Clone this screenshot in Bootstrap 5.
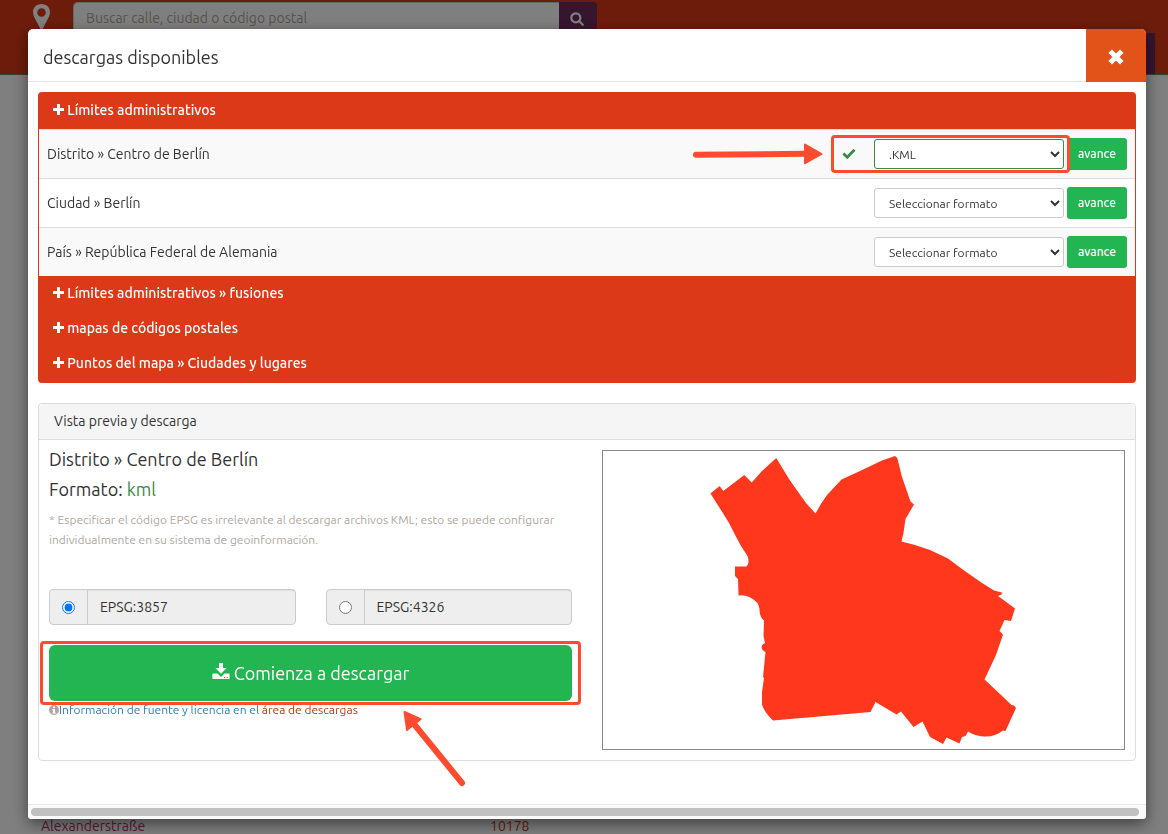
<!DOCTYPE html>
<html lang="es">
<head>
<meta charset="utf-8">
<meta name="viewport" content="width=device-width, initial-scale=1">
<title>Descargas disponibles</title>
<link href="https://cdn.jsdelivr.net/npm/bootstrap@5.3.0/dist/css/bootstrap.min.css" rel="stylesheet">
<style>
  :root { --brand: #db3917; --go: #24b553; --plum: #6d2a5e; --mark: #fe4b2f; --ok: #3c8a49; }
  body { font-family: Ubuntu, "Noto Sans", sans-serif; font-size: 14px; line-height: 20px; color: #333; background: #fff; }

  /* page behind the dialog */
  .site-head { background: var(--brand); height: 75px; border-bottom: 1px solid #777; padding: 2px 13px 0 33px; }
  .site-search { width: 524px; margin-left: 23px; height: 32px; }
  .site-search .form-control { border: 1px solid #ccc; border-radius: 4px 0 0 4px; font-size: 14px; padding: 0 12px; }
  .site-search .form-control::placeholder { color: #aea79f; }
  .site-search .btn { background: var(--plum); width: 38px; padding: 0 2px 2px 0; border: 0; border-radius: 0 4px 4px 0; color: #fff; }
  .site-tab { width: 60px; height: 41px; background: var(--plum); }
  .street-list { padding: 0 41px; line-height: 16px; }
  .street-list a { color: #b8336a; text-decoration: none; }
  .street-list a.zip { color: var(--brand); }
  .street-list .first { width: 449px; }

  /* dialog */
  .modal-backdrop { --bs-backdrop-opacity: .5; }
  .modal-dialog { max-width: none; margin: 29px 22px 15px 28px; }
  .modal-content { border: 0; border-radius: 5px; color: #333; box-shadow: 0 5px 15px rgba(0,0,0,.5); }
  .modal-header { border-bottom: 1px solid #e5e5e5; border-radius: 5px 5px 0 0; padding: 0 0 0 15px; height: 53px; }
  .modal-title { font-size: 18px; line-height: 26px; font-weight: 400; }
  .closer { width: 60px; background: #e25319; color: #fff; border: 0; border-radius: 0 5px 0 0; margin-bottom: -1px; }
  .modal-body { padding: 10px 10px 43px; }

  .groups { background: var(--brand); border-radius: 4px; padding-bottom: 2px; }
  .group-head { display: block; width: 100%; height: 35px; border: 0; background: none; color: #fff; text-align: left; font-size: 14px; font-weight: 500; line-height: 20px; padding: 0 15px 2px; }
  .group-head.open { height: 37px; }
  .group-head svg { vertical-align: 0; }
  .go-btn svg { vertical-align: -1px; }
  .formats { margin: 0 1px; width: calc(100% - 2px); background: #fff; }
  .formats th, .formats td { border-top: 1px solid #ddd; padding: 8px; vertical-align: middle; font-weight: 400; }
  .formats tr:nth-child(odd) { background: #f9f9f9; }
  .formats th { width: 48%; }
  .pickers { gap: 3px; }
  .fmt { width: 190px; height: 30px; border: 1px solid #ccc; border-radius: 3px; background: #fff; color: #333; font-size: 12px; padding: 0 10px; }
  .fmt.picked { border-color: var(--ok); }
  .btn-next { width: 60px; height: 32px; padding: 0; border: 0; border-radius: 3px; background: var(--go); color: #fff; font-size: 12px; font-weight: 500; }
  .pick-wrap { gap: 18px; }

  .preview { margin-top: 20px; border: 1px solid #ddd; border-radius: 4px; }
  .preview .card-header { background: #f5f5f5; border-bottom: 1px solid #ddd; padding: 7px 15px 8px; }
  .preview .card-body { padding: 10px; }
  .pair { --bs-gutter-x: 30px; }
  .big-line { font-size: 18px; line-height: 18px; font-weight: 400; margin: 0 0 12px; }
  .note { font-size: 12px; color: #aea79f; margin: 0 0 39px; }
  .epsg { border: 1px solid #ccc; border-radius: 4px; background: #eee; height: 36px; }
  .epsg .knob { width: 38px; border-right: 1px solid #ccc; }
  .epsg input { width: 13px; height: 13px; margin: 0; }
  .epsg label { padding: 0 12px; box-shadow: inset 0 1px 1px rgba(0,0,0,.075); line-height: 34px; }
  .go-wrap { margin-top: 20px; }
  .go-btn { height: 56px; border: 0; border-radius: 6px; background: var(--go); color: #fff; font-size: 18px; }
  .source { font-size: 12px; line-height: 18px; }
  .source a { color: #2a82ac; text-decoration: none; }
  .source a.area { color: #b8371a; }
  .map-box { border: 1px solid #888; height: 300px; }

  .hscroll { border-top: 1px solid #e8e8e8; background: #fafafa; border-radius: 0 0 3px 3px; height: 15px; padding: 3px 7px 0 3px; }
  .hscroll div { background: #c1c1c1; height: 8px; border-radius: 4px; }

  /* highlights laid over the controls */
  .frame { position: absolute; border: 3px solid var(--mark); border-radius: 4px; pointer-events: none; }
  .frame-pick { inset: -4px -6px -4px -11px; }
  .frame-go { inset: -4px -9px -4px -9px; }
  .arrow-pick { position: absolute; right: calc(100% + 18px); top: 4px; }
  .arrow-go { position: absolute; left: 353px; top: 65px; }
</style>
</head>
<body>
<svg class="d-none" aria-hidden="true">
  <symbol id="plus" viewBox="0 0 11 11"><path fill="currentColor" d="M4 0.6Q4 0 4.6 0H6.4Q7 0 7 .6V4h3.4q.6 0 .6.6v1.8q0 .6-.6.6H7v3.4q0 .6-.6.6H4.600q-.6 0-.6-.6V7H.6Q0 7 0 6.400V4.600Q0 4 .6 4H4z"/></symbol>
</svg>

<div class="d-flex flex-column vh-100 overflow-hidden">
  <header class="site-head d-flex align-items-start">
    <svg width="17" height="30" viewBox="0 0 17 30"><path fill="#fff" fill-rule="evenodd" d="M8.500 2C3.500 2 0 5.600 0 10c0 3 1.500 5.500 3.500 9.500l5 9.500 5-9.500C15.500 15.500 17 13 17 10c0-4.400-3.500-8-8.500-8zm0 4.200a4 4 0 1 1 0 8.600 4 4 0 0 1 0-8.600z"/></svg>
    <form class="site-search input-group flex-nowrap">
      <input class="form-control" type="search" aria-label="Buscar" placeholder="Buscar calle, ciudad o código postal">
      <button class="btn" type="button" aria-label="Buscar"><svg width="14" height="14" viewBox="0 0 14 14" fill="none" stroke="#fff" stroke-width="2.200"><circle cx="5.800" cy="5.800" r="4.500"/><path d="M9.200 9.200l3.600 3.600" stroke-linecap="round"/></svg></button>
    </form>
    <div class="site-tab ms-auto align-self-end"></div>
  </header>
  <div class="street-list d-flex mt-auto">
    <a class="first" href="#">Alexanderstraße</a><a class="zip" href="#">10178</a>
  </div>
</div>

<div class="modal-backdrop show"></div>
<div class="modal d-block" tabindex="-1" role="dialog" aria-labelledby="dlg-title">
  <div class="modal-dialog">
    <div class="modal-content">
      <div class="modal-header align-items-stretch">
        <h4 class="modal-title align-self-center pt-1" id="dlg-title">descargas disponibles</h4>
        <button class="closer" type="button" aria-label="Cerrar"><svg width="18" height="18" viewBox="0 0 18 18"><path d="M3.200 3.200l11.600 11.600m0-11.600l-11.600 11.600" stroke="#fff" stroke-width="5"/></svg></button>
      </div>

      <div class="modal-body">
        <div class="groups">
          <button class="group-head open" type="button"><svg width="11" height="11"><use href="#plus"/></svg> Límites administrativos</button>
          <table class="formats">
            <tbody>
              <tr>
                <th scope="row">Distrito » Centro de Berlín</th>
                <td>
                  <div class="pickers d-flex justify-content-end align-items-center">
                    <div class="pick-wrap position-relative d-flex align-items-center">
                      <svg width="14" height="12" viewBox="0 0 14 12"><path fill="#3c8a49" d="M.4 6.600L2.300 4.600 5.200 7.200 11.500.8l2 1.900L5.300 11.200z"/></svg>
                      <select class="fmt picked" aria-label="Formato para Centro de Berlín"><option>.KML</option></select>
                      <span class="frame frame-pick"></span>
                      <svg class="arrow-pick" width="131" height="22" viewBox="0 0 131 22"><path d="M3 11.700L112 10.800" stroke="#fe4b2f" stroke-width="6" stroke-linecap="round"/><path fill="#fe4b2f" d="M111 1.500q0-1.500 1.500-.8L129 10.300q1.200.7 0 1.400L112.500 21q-1.500.6-1.500-.8z"/></svg>
                    </div>
                    <button class="btn-next" type="button">avance</button>
                  </div>
                </td>
              </tr>
              <tr>
                <th scope="row">Ciudad » Berlín</th>
                <td>
                  <div class="pickers d-flex justify-content-end align-items-center">
                    <select class="fmt" aria-label="Formato para Berlín"><option>Seleccionar formato</option></select>
                    <button class="btn-next" type="button">avance</button>
                  </div>
                </td>
              </tr>
              <tr>
                <th scope="row">País » República Federal de Alemania</th>
                <td>
                  <div class="pickers d-flex justify-content-end align-items-center">
                    <select class="fmt" aria-label="Formato para Alemania"><option>Seleccionar formato</option></select>
                    <button class="btn-next" type="button">avance</button>
                  </div>
                </td>
              </tr>
            </tbody>
          </table>
          <button class="group-head" type="button"><svg width="11" height="11"><use href="#plus"/></svg> Límites administrativos » fusiones</button>
          <button class="group-head" type="button"><svg width="11" height="11"><use href="#plus"/></svg> mapas de códigos postales</button>
          <button class="group-head" type="button"><svg width="11" height="11"><use href="#plus"/></svg> Puntos del mapa » Ciudades y lugares</button>
        </div>

        <section class="card preview">
          <div class="card-header">Vista previa y descarga</div>
          <div class="card-body">
            <div class="row pair">
              <div class="col-6">
                <h4 class="big-line">Distrito » Centro de Berlín</h4>
                <h4 class="big-line">Formato: <span style="color:var(--ok)">kml</span></h4>
                <p class="note">* Especificar el código EPSG es irrelevante al descargar archivos KML; esto se puede configurar individualmente en su sistema de geoinformación.</p>
                <div class="row pair">
                  <div class="col-6">
                    <div class="epsg d-flex">
                      <span class="knob d-flex align-items-center justify-content-center"><input type="radio" name="epsg" id="e3857" checked></span>
                      <label class="flex-fill" for="e3857">EPSG:3857</label>
                    </div>
                  </div>
                  <div class="col-6">
                    <div class="epsg d-flex">
                      <span class="knob d-flex align-items-center justify-content-center"><input type="radio" name="epsg" id="e4326"></span>
                      <label class="flex-fill" for="e4326">EPSG:4326</label>
                    </div>
                  </div>
                </div>
                <div class="go-wrap position-relative">
                  <button class="go-btn w-100" type="button"><svg width="18" height="18" viewBox="0 0 18 18"><path fill="#fff" fill-rule="evenodd" d="M7 0h4v5h3.500L9 10.800 3.500 5H7zM1 10.500h4.500L9 14 12.500 10.500H17q.6 0 .6.6v4.300q0 .6-.6.6H1q-.6 0-.6-.6v-4.300Q.4 10.500 1 10.500zm11 3.500v1h1.200v-1zm2.600 0v1h1.200v-1z"/></svg> Comienza a descargar</button>
                  <span class="frame frame-go"></span>
                  <svg class="arrow-go" width="66" height="78" viewBox="0 0 66 78"><path d="M12 14L60 73" stroke="#fe4b2f" stroke-width="6" stroke-linecap="round"/><path fill="#fe4b2f" d="M1.500 2q0-1.500 1.500-1L19 8.200q1.200.6.300 1.500L5.500 20.800q-1.200.8-1.400-.6z"/></svg>
                </div>
                <div class="source d-flex align-items-center">
                  <svg width="10" height="10" viewBox="0 0 10 10"><circle cx="5" cy="5" r="5" fill="#aea79f"/><path fill="#fff" d="M4 1.500h2V3H4zM3.300 4H6v3.500h.8v1H3.300v-1H4V5h-.7z"/></svg>
                  <span><a href="#">Información de fuente y licencia en el</a> <a class="area" href="#">área de descargas</a></span>
                </div>
              </div>
              <div class="col-6">
                <div class="map-box d-flex justify-content-center">
                  <svg width="521" height="298" viewBox="603 451 521 298" role="img" aria-label="Centro de Berlín"><path fill="#ff371c" d="M710.500 493.500L719.600 486 723.300 491 744.300 475 751.700 482.500 762 471 776.300 458 789 479 806 503 815.500 513.500Q821 503 827 495L841.500 479.500 860 471 882 460.500 895 456 897.300 458 902 477 910.500 501.500 914 504.500 905.500 519 903.500 533 901.500 541.500 915 545 930 550 948 558.500 962 569 982 583 994 590.500 1002 592.500 1001.500 594.500 998 596 1015 608.500 1011 621 1004.500 620 999.500 631 1003 634.500 996 655 984.500 679.500 1000 694 1011.500 705 1014 705.500 1016 708 1013.500 713.500 1005.500 731 1003 730.500Q995 737 984 736.500 975 736 968 731.500L965.500 736 962 737 959.500 743.500 946.500 737.500 943 744 930 737 922.500 721.500 913.500 727 901 711.500 896.500 714.500 875.500 702 870.500 712 773 720.500Q764 712 762 704.500L762 692 764 678 763 677 765.500 652Q761.500 650 761.500 647 762 644 765 643L763.500 636 764 620.500Q760 617 759.700 612 759.500 605 756.500 602 748 594 738.500 595.500L738 579 735 576V566.500H746.500Q750 563 747.500 556L741 546Q735 535 729 523L722.500 512.500z"/></svg>
                </div>
              </div>
            </div>
          </div>
        </section>
      </div>
      <div class="hscroll"><div></div></div>
    </div>
  </div>
</div>
<script src="https://cdn.jsdelivr.net/npm/bootstrap@5.3.0/dist/js/bootstrap.bundle.min.js"></script>
</body>
</html>
